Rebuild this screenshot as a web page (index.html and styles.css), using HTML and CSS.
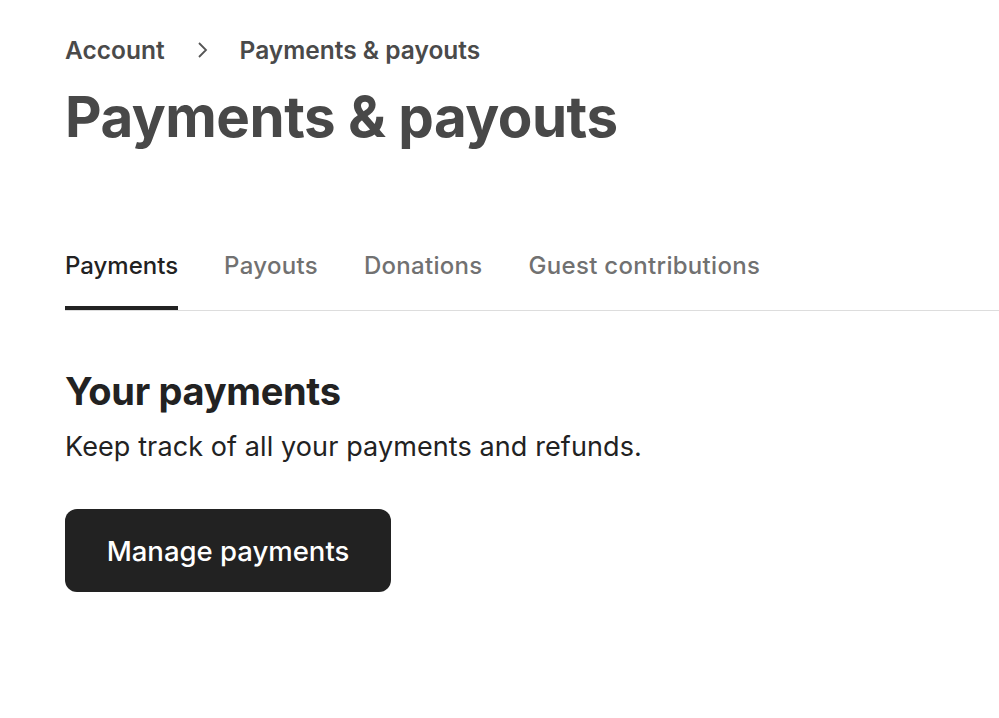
FILE: index.html
```html
<!DOCTYPE html>
<html>
<head>
<meta charset="utf-8">
<link rel="stylesheet" href="styles.css">
</head>
<body>
<div class="page">
  <nav class="crumbs">
    <span class="crumb">Account</span>
    <svg class="chev" width="12" height="20" viewBox="0 0 12 20"><path d="M2 3l7 7-7 7" fill="none" stroke="#555" stroke-width="1.8"/></svg>
    <span class="crumb">Payments &amp; payouts</span>
  </nav>
  <h1 class="title">Payments &amp; payouts</h1>
  <div class="tabs">
    <span class="tab active">Payments</span>
    <span class="tab">Payouts</span>
    <span class="tab">Donations</span>
    <span class="tab">Guest contributions</span>
  </div>
  <section class="section">
    <h2 class="heading">Your payments</h2>
    <p class="desc">Keep track of all your payments and refunds.</p>
    <button class="btn">Manage payments</button>
  </section>
</div>
</body>
</html>
```
FILE: styles.css
```css
html, body { margin: 0; padding: 0; background: #fff; }
body { font-family: Inter, "Noto Sans", sans-serif; color: #222; }
.page { padding: 32px 0 0 65px; }
.crumbs { display: flex; align-items: center; height: 36px; }
.crumb { font-size: 24.5px; font-weight: 600; color: #4a4a4a; }
.chev { margin: 0 31px 0 32px; }
.title { margin: 14px 0 0; font-size: 56.5px; font-weight: 700; color: #484848; line-height: 70px; letter-spacing: -0.5px; }
.tabs { display: flex; gap: 46px; margin-top: 98px; border-bottom: 1.5px solid #ddd; align-items: flex-start; }
.tab { font-size: 24px; font-weight: 500; color: #717171; line-height: 32px; padding-bottom: 28px; letter-spacing: 0.3px; }
.tab.active { color: #222; padding-bottom: 24px; border-bottom: 4px solid #222; letter-spacing: 0; }
.section { padding-top: 57px; }
.heading { margin: 0; font-size: 38px; font-weight: 700; line-height: 46px; letter-spacing: -0.3px; }
.desc { margin: 15px 0 0; font-size: 27px; line-height: 36px; color: #222; letter-spacing: 0.1px; }
.btn { margin-top: 44px; width: 326px; height: 83px; border: none; border-radius: 12px; background: #222; color: #fff; font-family: Inter, "Noto Sans", sans-serif; font-size: 27.5px; font-weight: 500; }
```
